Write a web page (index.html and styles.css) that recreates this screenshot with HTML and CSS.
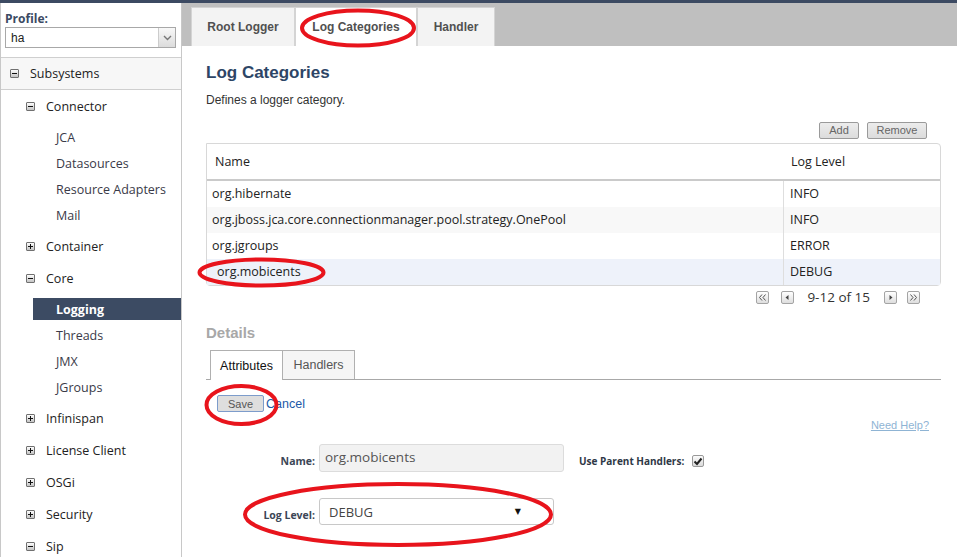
FILE: index.html
```html
<!DOCTYPE html>
<html>
<head>
<meta charset="utf-8">
<title>Log Categories</title>
<link rel="stylesheet" href="styles.css">
</head>
<body>
<div class="topbar"></div>
<div class="app">
  <aside class="sidebar">
    <div class="profile">
      <div class="profile-label">Profile:</div>
      <div class="profile-select">
        <span class="ps-val">ha</span>
        <span class="ps-btn"><svg width="9" height="6" viewBox="0 0 9 6"><path d="M1 1 L4.5 4.5 L8 1" fill="none" stroke="#777" stroke-width="1.4"/></svg></span>
      </div>
    </div>
    <div class="root-row"><span class="tog minus"></span>Subsystems</div>
    <div class="tree">
      <div class="grp"><span class="tog minus"></span>Connector</div>
      <div class="leaves">
        <div class="leaf"><span>JCA</span></div>
        <div class="leaf"><span>Datasources</span></div>
        <div class="leaf"><span>Resource Adapters</span></div>
        <div class="leaf"><span>Mail</span></div>
      </div>
      <div class="grp"><span class="tog plus"></span>Container</div>
      <div class="grp"><span class="tog minus"></span>Core</div>
      <div class="leaves">
        <div class="leaf selected"><span>Logging</span></div>
        <div class="leaf"><span>Threads</span></div>
        <div class="leaf"><span>JMX</span></div>
        <div class="leaf"><span>JGroups</span></div>
      </div>
      <div class="grp"><span class="tog plus"></span>Infinispan</div>
      <div class="grp"><span class="tog plus"></span>License Client</div>
      <div class="grp"><span class="tog plus"></span>OSGi</div>
      <div class="grp"><span class="tog plus"></span>Security</div>
      <div class="grp"><span class="tog minus"></span>Sip</div>
    </div>
  </aside>

  <main class="main">
    <div class="tabbar">
      <div class="tab tab-root">Root Logger</div>
      <div class="tab tab-cat active">Log Categories</div>
      <div class="tab tab-handler">Handler</div>
    </div>

    <div class="content">
      <h1 class="title">Log Categories</h1>
      <p class="desc">Defines a logger category.</p>

      <div class="toolbar">
        <button class="tbtn btn-add">Add</button>
        <button class="tbtn btn-remove">Remove</button>
      </div>

      <div class="table">
        <div class="thead">
          <div class="c1">Name</div>
          <div class="c2">Log Level</div>
        </div>
        <div class="trow">
          <div class="c1">org.hibernate</div>
          <div class="c2">INFO</div>
        </div>
        <div class="trow alt">
          <div class="c1">org.jboss.jca.core.connectionmanager.pool.strategy.OnePool</div>
          <div class="c2">INFO</div>
        </div>
        <div class="trow">
          <div class="c1">org.jgroups</div>
          <div class="c2">ERROR</div>
        </div>
        <div class="trow sel">
          <div class="c1">org.mobicents</div>
          <div class="c2">DEBUG</div>
        </div>
      </div>

      <div class="pager">
        <span class="pbtn"><svg width="11" height="11" viewBox="0 0 11 11"><path d="M5 2.5 L2.5 5.5 L5 8.5 M8.5 2.5 L6 5.5 L8.5 8.5" fill="none" stroke="#555" stroke-width="1"/></svg></span>
        <span class="pbtn gap12"><svg width="11" height="11" viewBox="0 0 11 11"><path d="M6.5 3 L3.5 5.5 L6.5 8 Z" fill="#444"/></svg></span>
        <span class="ptext">9-12 of 15</span>
        <span class="pbtn gap14"><svg width="11" height="11" viewBox="0 0 11 11"><path d="M4.5 3 L7.5 5.5 L4.5 8 Z" fill="#444"/></svg></span>
        <span class="pbtn gap10"><svg width="11" height="11" viewBox="0 0 11 11"><path d="M2.5 2.5 L5 5.5 L2.5 8.5 M6 2.5 L8.5 5.5 L6 8.5" fill="none" stroke="#555" stroke-width="1"/></svg></span>
      </div>

      <h2 class="details">Details</h2>

      <div class="subtabs">
        <div class="stab active">Attributes</div>
        <div class="stab">Handlers</div>
      </div>

      <div class="actions">
        <button class="save">Save</button>
        <a class="cancel">Cancel</a>
      </div>

      <div class="help-row"><a class="help">Need Help?</a></div>

      <div class="form">
        <div class="frow">
          <label class="flabel">Name:</label>
          <div class="finput">org.mobicents</div>
          <label class="flabel2">Use Parent Handlers:</label>
          <span class="check"><svg width="10" height="9" viewBox="0 0 10 9"><path d="M1.5 4.5 L4 7 L8.5 1.5" fill="none" stroke="#222" stroke-width="2"/></svg></span>
        </div>
        <div class="frow frow2">
          <label class="flabel">Log Level:</label>
          <div class="fselect"><span>DEBUG</span><span class="farrow">&#9660;</span></div>
        </div>
      </div>
    </div>
  </main>
</div>

<svg class="marks" width="957" height="557" viewBox="0 0 957 557">
  <ellipse cx="358" cy="28" rx="56" ry="17.5" fill="none" stroke="#e8141c" stroke-width="4"/>
  <ellipse cx="261.5" cy="272.5" rx="62" ry="13" fill="none" stroke="#e8141c" stroke-width="4"/>
  <ellipse cx="241.5" cy="405" rx="35" ry="19" fill="none" stroke="#e8141c" stroke-width="4"/>
  <ellipse cx="398" cy="514.5" rx="153" ry="30.5" fill="none" stroke="#e8141c" stroke-width="4"/>
</svg>
</body>
</html>
```

FILE: styles.css
```css
html, body {
  margin: 0;
  padding: 0;
  background: #fff;
  width: 957px;
  height: 557px;
  overflow: hidden;
  position: relative;
  font-family: "Open Sans", "DejaVu Sans", sans-serif;
  color: #333;
}

.topbar {
  height: 3px;
  background: #3c4a62;
}

.app {
  display: flex;
  height: 554px;
}

/* Sidebar */
.sidebar {
  width: 180px;
  flex: none;
  border-left: 1px solid #c8c8c8;
  border-right: 1px solid #c8c8c8;
  box-sizing: content-box;
  background: #fff;
}

.profile {
  padding: 7px 0 0 4px;
  height: 47px;
  box-sizing: border-box;
}

.profile-label {
  font-weight: bold;
  font-size: 12px;
  line-height: 17px;
  color: #3b4a63;
}

.profile-select {
  width: 171px;
  height: 21px;
  box-sizing: border-box;
  border: 1px solid #a8a8a8;
  display: flex;
  align-items: center;
  justify-content: space-between;
}

.ps-val {
  font-family: "Liberation Sans", Arial, sans-serif;
  font-size: 12px;
  color: #222;
  padding-left: 5px;
}

.ps-btn {
  width: 16px;
  height: 19px;
  border-left: 1px solid #ccc;
  background: linear-gradient(#f8f8f8, #dcdcdc);
  display: flex;
  align-items: center;
  justify-content: center;
}

.root-row {
  margin-top: 7px;
  height: 33px;
  box-sizing: border-box;
  border-top: 1px solid #cfcfcf;
  border-bottom: 1px solid #cfcfcf;
  background: #f7f7f7;
  display: flex;
  align-items: center;
  padding-left: 9px;
  font-size: 12.5px;
  color: #222;
}

.tog {
  width: 9px;
  height: 9px;
  box-sizing: border-box;
  border: 1px solid #707070;
  border-radius: 1px;
  background: linear-gradient(#fdfdfd, #c4c4c4);
  position: relative;
  display: inline-block;
  margin-right: 11px;
  flex: none;
}

.tog::before {
  content: "";
  position: absolute;
  left: 1px;
  right: 1px;
  top: 3px;
  height: 1px;
  background: #111;
}

.tog.plus::after {
  content: "";
  position: absolute;
  top: 1px;
  bottom: 1px;
  left: 3px;
  width: 1px;
  background: #111;
}

.grp {
  height: 32px;
  display: flex;
  align-items: center;
  padding-left: 25px;
  font-size: 12.5px;
  color: #222;
}

.leaves {
  padding: 2px 0;
}

.leaf {
  height: 26px;
  padding: 2px 0 2px 32px;
  box-sizing: border-box;
}

.leaf span {
  display: block;
  height: 21px;
  padding-top: 1px;
  line-height: 22px;
  padding-left: 23px;
  font-size: 12.5px;
  color: #3a3a48;
}

.leaf.selected span {
  background: #3c4b63;
  color: #fff;
  font-weight: bold;
}

/* Main */
.main {
  flex: 1;
  display: flex;
  flex-direction: column;
}

.tabbar {
  height: 43px;
  box-sizing: border-box;
  background: #bfbfbf;
  padding: 4px 0 0 9px;
  display: flex;
}

.tab {
  height: 39px;
  box-sizing: border-box;
  border: 1px solid #d4d4d4;
  border-bottom: none;
  background: #f3f3f3;
  font-family: "Liberation Sans", Arial, sans-serif;
  font-weight: bold;
  font-size: 12px;
  color: #505050;
  display: flex;
  align-items: center;
  justify-content: center;
}

.tab-root { width: 104px; }
.tab-cat { width: 122px; }
.tab-handler { width: 78px; }

.tab.active {
  background: #fff;
}

.content {
  padding: 0 16px 0 24px;
}

.title {
  margin: 16px 0 0;
  font-family: "Liberation Sans", Arial, sans-serif;
  font-size: 17px;
  line-height: 22px;
  font-weight: bold;
  color: #2d4566;
}

.desc {
  margin: 8px 0 0;
  font-family: "Liberation Sans", Arial, sans-serif;
  font-size: 12px;
  line-height: 16px;
  color: #333;
}

.toolbar {
  display: flex;
  justify-content: flex-end;
  gap: 8px;
  padding-right: 14px;
  margin-top: 14px;
}

.tbtn {
  height: 17px;
  padding: 0;
  border: 1px solid #9a9a9a;
  border-radius: 2px;
  background: linear-gradient(#ececec, #dcdcdc);
  font-family: "Liberation Sans", Arial, sans-serif;
  font-size: 11px;
  color: #666;
  line-height: 15px;
}

.btn-add { width: 40px; }
.btn-remove { width: 60px; }

.table {
  margin-top: 4px;
  border: 1px solid #d8d8d8;
  border-radius: 0 4px 4px 4px;
  font-size: 12.5px;
  color: #222;
}

.thead, .trow {
  display: flex;
}

.thead {
  height: 35px;
  align-items: center;
  border-bottom: 2px solid #cacaca;
}

.thead .c1 { padding-left: 8px; width: 568px; }
.thead .c2 { padding-left: 8px; }

.trow {
  height: 26px;
}

.trow .c1 {
  width: 571px;
  padding-left: 5px;
  line-height: 26px;
}

.trow .c2 {
  flex: 1;
  border-left: 1px solid #dedede;
  padding-left: 6px;
  line-height: 26px;
}

.trow.alt { background: #f8f8f8; }
.trow.sel { background: #eef2fa; }
.trow.sel .c1 { padding-left: 10px; width: 566px; }

.pager {
  margin-top: 4px;
  height: 14px;
  display: flex;
  justify-content: flex-end;
  align-items: center;
  padding-right: 21px;
}

.pbtn {
  width: 13px;
  height: 13px;
  box-sizing: border-box;
  border: 1px solid #a4a4a4;
  border-radius: 2px;
  background: linear-gradient(#fff, #dedede);
  display: flex;
  align-items: center;
  justify-content: center;
}

.gap12 { margin-left: 12px; }
.gap14 { margin-left: 14px; }
.gap10 { margin-left: 10px; }

.ptext {
  margin-left: 13px;
  font-size: 13.5px;
  color: #333;
  line-height: 14px;
}

.details {
  margin: 20px 0 0;
  font-family: "Liberation Sans", Arial, sans-serif;
  font-size: 15px;
  line-height: 18px;
  font-weight: bold;
  color: #a8a8a8;
}

.subtabs {
  margin-top: 8px;
  display: flex;
  padding-left: 4px;
  border-bottom: 1px solid #a8a8a8;
}

.stab {
  height: 29px;
  box-sizing: border-box;
  border: 1px solid #b0b0b0;
  border-bottom: none;
  font-family: "Liberation Sans", Arial, sans-serif;
  font-size: 12.5px;
  color: #555;
  display: flex;
  align-items: center;
  justify-content: center;
  width: 73px;
  background: #f5f5f5;
  margin-left: -1px;
}

.stab.active {
  background: #fff;
  color: #111;
  margin-left: 0;
  width: 73px;
  margin-bottom: -1px;
  height: 30px;
}

.actions {
  margin-top: 15px;
  display: flex;
  align-items: center;
  padding-left: 11px;
  height: 17px;
}

.save {
  width: 47px;
  height: 17px;
  padding: 0;
  border: 1px solid #7d9ccb;
  border-radius: 2px;
  background: #dedede;
  font-family: "Liberation Sans", Arial, sans-serif;
  font-size: 11px;
  color: #555;
}

.cancel {
  margin-left: 2px;
  font-family: "Liberation Sans", Arial, sans-serif;
  font-size: 12.5px;
  color: #1c5aa8;
}

.help-row {
  margin-top: 6px;
  height: 14px;
  display: flex;
  justify-content: flex-end;
  padding-right: 12px;
}

.help {
  font-family: "Liberation Sans", Arial, sans-serif;
  font-size: 11px;
  line-height: 14px;
  color: #8fb4d4;
  text-decoration: underline;
}

.form {
  margin-top: 12px;
}

.frow {
  display: flex;
  align-items: center;
  height: 28px;
}

.frow2 {
  margin-top: 26px;
  height: 27px;
}

.flabel {
  width: 109px;
  text-align: right;
  font-size: 10.5px;
  font-weight: bold;
  color: #3c4656;
  margin-right: 4px;
  padding-top: 6px;
}

.finput {
  width: 245px;
  height: 28px;
  box-sizing: border-box;
  border: 1px solid #dcdcdc;
  border-radius: 3px;
  background: #f2f2f2;
  font-size: 13.5px;
  color: #555;
  padding: 3px 0 0 5px;
  line-height: 18px;
  align-self: flex-start;
}

.flabel2 {
  margin-left: 15px;
  font-size: 10px;
  font-weight: bold;
  color: #2e3846;
  padding-top: 6px;
}

.check {
  margin-left: 8px;
  margin-top: 6px;
  width: 12px;
  height: 12px;
  box-sizing: border-box;
  border: 1px solid #999;
  border-radius: 2px;
  background: linear-gradient(#fbfbfb, #dadada);
  display: flex;
  align-items: center;
  justify-content: center;
}

.fselect {
  width: 235px;
  height: 27px;
  box-sizing: border-box;
  border: 1px solid #c8c8c8;
  border-radius: 3px;
  background: #fff;
  display: flex;
  align-items: center;
  justify-content: space-between;
  padding: 0 32px 0 9px;
  font-size: 13px;
  color: #444;
}

.farrow {
  font-size: 8px;
  color: #111;
  font-family: "DejaVu Sans", sans-serif;
}

.marks {
  position: absolute;
  left: 0;
  top: 0;
  pointer-events: none;
}
```
